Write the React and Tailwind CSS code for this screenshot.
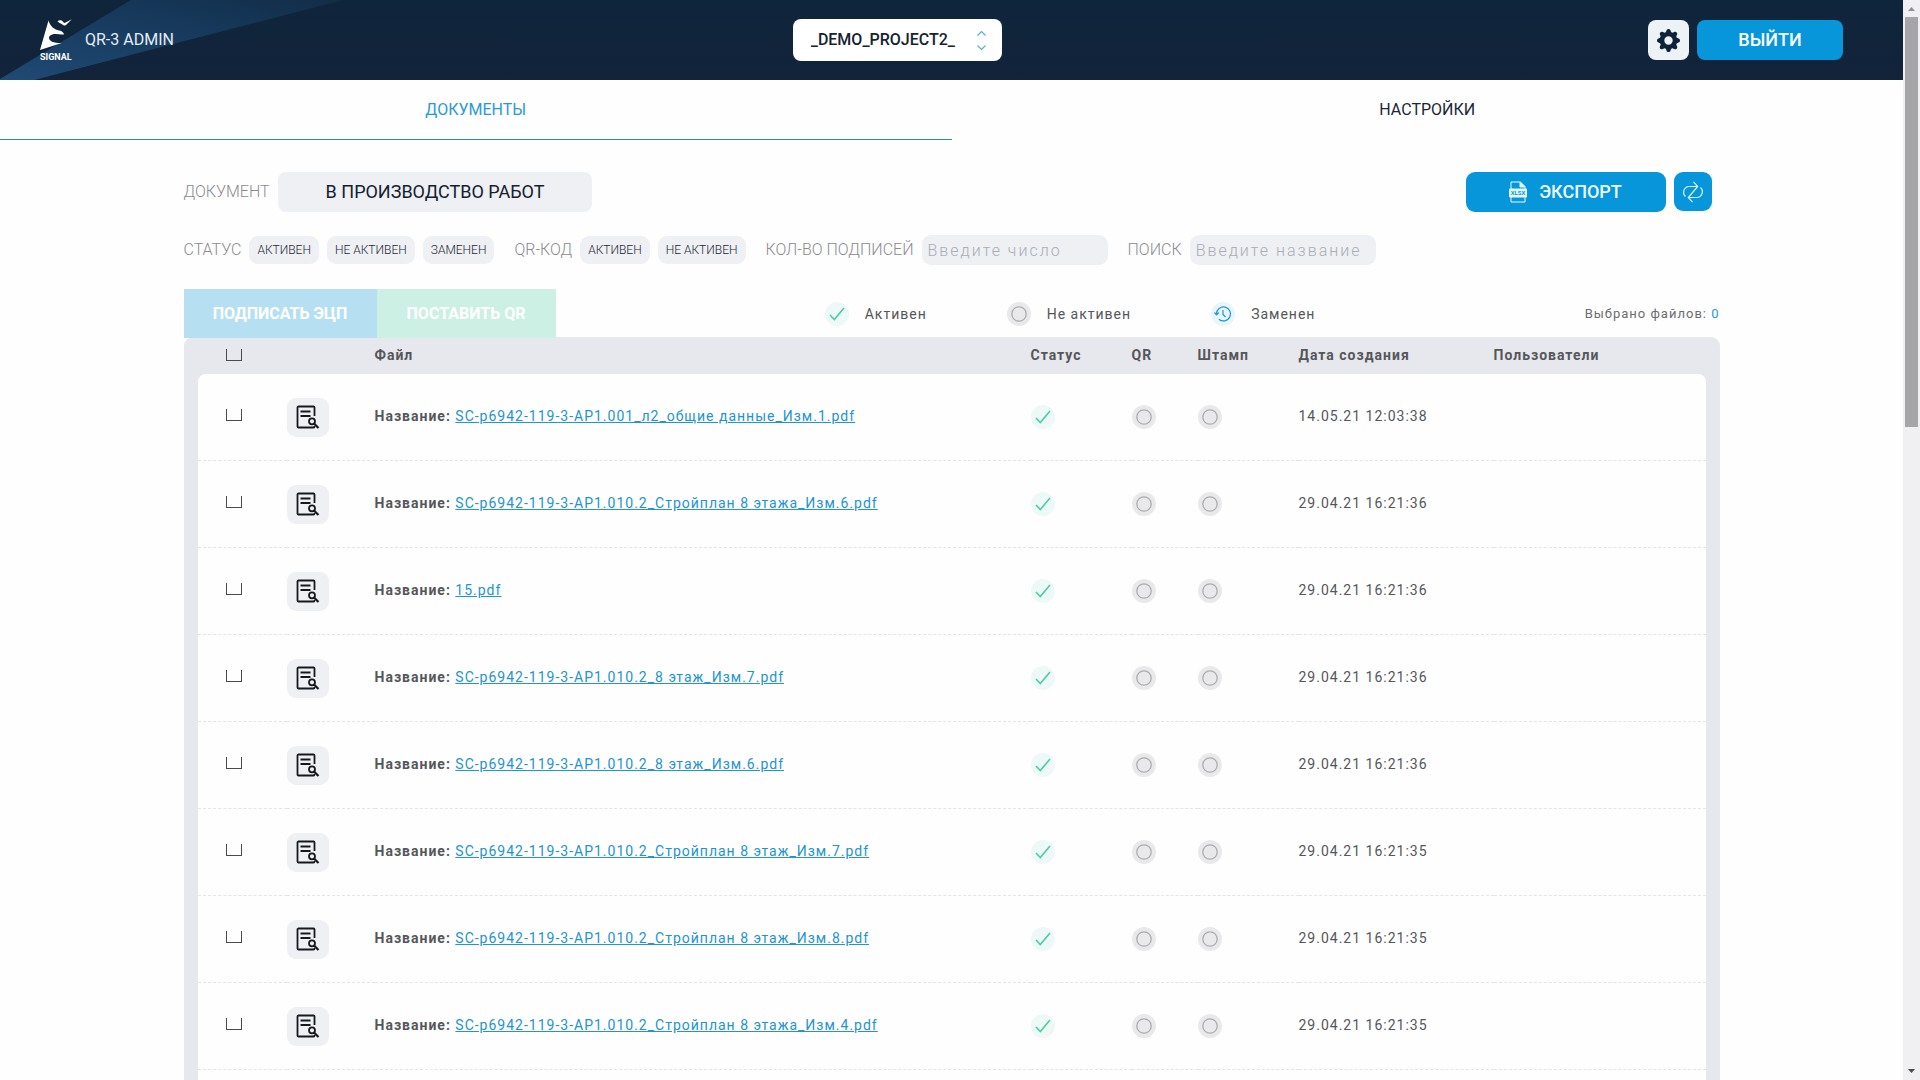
import React, { useState } from "react";
import { BsGearFill } from "react-icons/bs";

const projects = ["_DEMO_PROJECT2_"];

const files = [
  { name: "SC-p6942-119-3-АР1.001_л2_общие данные_Изм.1.pdf", date: "14.05.21 12:03:38" },
  { name: "SC-p6942-119-3-АР1.010.2_Стройплан 8 этажа_Изм.6.pdf", date: "29.04.21 16:21:36" },
  { name: "15.pdf", date: "29.04.21 16:21:36" },
  { name: "SC-p6942-119-3-АР1.010.2_8 этаж_Изм.7.pdf", date: "29.04.21 16:21:36" },
  { name: "SC-p6942-119-3-АР1.010.2_8 этаж_Изм.6.pdf", date: "29.04.21 16:21:36" },
  { name: "SC-p6942-119-3-АР1.010.2_Стройплан 8 этаж_Изм.7.pdf", date: "29.04.21 16:21:35" },
  { name: "SC-p6942-119-3-АР1.010.2_Стройплан 8 этаж_Изм.8.pdf", date: "29.04.21 16:21:35" },
  { name: "SC-p6942-119-3-АР1.010.2_Стройплан 8 этажа_Изм.4.pdf", date: "29.04.21 16:21:35" },
];

const Logo = () => (
  <svg width="33" height="42" viewBox="0 0 33 42" fill="#fff" aria-hidden="true">
    <path d="M8.500 1.500C10 7 14 10.500 19 11.500c2 .3 4 1.300 5.200 3.700-4 .7-8-.8-12 .3-2.600.8-3.700 2.600-3 4.500.9 2.500 5 4.200 12.500 4L0 31z" />
    <path d="M17.500 2.200c1.800-1.700 4.200-1.200 5.300.3.700 1 1.300 1.700 2.400 1.300L31.800.3 26 6c-1.200 1.100-2.600.6-3.600-.5-1.300-1.300-3.200-1.200-4.900-3.300z" />
    <text x="0" y="40.500" fontSize="9" fontWeight="700" fontFamily="Roboto, sans-serif">SIGNAL</text>
  </svg>
);

const Check = () => (
  <svg width="24" height="24" viewBox="0 0 24 24" fill="none" role="img" aria-label="Активен">
    <circle cx="12" cy="12" r="12" fill="#edf9f6" />
    <path d="M5 13l4.300 4.500L19 6" stroke="#4fcba0" strokeWidth="1.600" />
  </svg>
);

const Inactive = () => (
  <svg width="24" height="24" viewBox="0 0 24 24" fill="none" role="img" aria-label="Не активен">
    <circle cx="12" cy="12" r="12" fill="#e9e9eb" />
    <circle cx="12" cy="12" r="7.200" stroke="#acacae" strokeWidth="1.300" />
  </svg>
);

const Replaced = () => (
  <svg width="24" height="24" viewBox="0 0 24 24" fill="none" stroke="#1a97dc" strokeWidth="1.200" role="img" aria-label="Заменен">
    <circle cx="12" cy="12" r="12" fill="#e9f5fb" stroke="none" />
    <path d="M5.500 12a7 7 0 1 1 2.400 5.200" />
    <path d="M3.500 10.500l2 2.300 2.200-2.300" />
    <path d="M12 8v4.500l2.500 2.500" />
  </svg>
);

const DocSearch = () => (
  <svg width="24" height="24" viewBox="0 0 24 24" fill="none" stroke="#15191e" strokeWidth="1.800" aria-hidden="true">
    <path d="M18.500 11V2.500a1 1 0 0 0-1-1h-15a1 1 0 0 0-1 1v19a1 1 0 0 0 1 1h15a1 1 0 0 0 1-1V21" />
    <path d="M4.500 6.500h10M4.500 11h10" />
    <circle cx="16" cy="16.300" r="3" />
    <path d="M18 18.500l4.500 4.500" strokeWidth="2.200" />
  </svg>
);

const XlsxIcon = () => (
  <svg width="18" height="22" viewBox="0 0 18 22" fill="none" stroke="#e6fbff" aria-hidden="true">
    <path d="M2 8V1h9.500L16 5.500V8M2 16v5h14v-5" />
    <path d="M11 1v5h5z" fill="#e6fbff" />
    <rect x="0" y="7.500" width="18" height="9" rx="1" fill="#e6fbff" stroke="none" />
    <text x="9" y="14" fontSize="6" fontWeight="700" textAnchor="middle" fill="#0796da" stroke="none" fontFamily="Roboto, sans-serif">XLSX</text>
  </svg>
);

const RefreshIcon = () => (
  <svg width="22" height="22" viewBox="0 0 22 22" fill="none" stroke="#d6f3ff" strokeWidth="1.200" aria-hidden="true">
    <path d="M3.500 15.500A5.800 5.800 0 0 1 6.500 5.500h9" />
    <path d="M18.500 6.500a5.800 5.800 0 0 1-3 10h-9" />
    <path d="M11.500.800l4.200 4.700-9.400 11 4.200 4.700" />
  </svg>
);

const Pill = ({ children }) => (
  <button type="button" className="h-7 px-2 rounded-[9px] bg-[#eef0f4] text-xs text-[#1d2633] whitespace-nowrap">
    {children}
  </button>
);

const Checkbox = ({ label }) => (
  <input
    type="checkbox"
    aria-label={label}
    className="appearance-none block w-4 h-3 border border-t-0 border-[#4a4a4a] checked:bg-[#0796da]"
  />
);

const Header = () => (
  <header className="relative h-20 bg-linear-to-b from-[#0f253b] to-[#12233a] pl-10 pr-[60px] grid grid-cols-[17fr_auto_19fr] items-center">
    <svg className="absolute left-0 top-0" width="350" height="80" viewBox="0 0 350 80" aria-hidden="true">
      <defs>
        <linearGradient id="beam" x1="0" y1="1" x2="1" y2="0">
          <stop offset="0" stopColor="#1f4a75" />
          <stop offset="0.500" stopColor="#183c60" />
          <stop offset="1" stopColor="#122d48" />
        </linearGradient>
      </defs>
      <path d="M0 79L131 0h212L34 80H0z" fill="url(#beam)" />
    </svg>
    <div className="relative flex items-center gap-3">
      <Logo />
      <span className="text-base text-[#e3edf5]">QR-3 ADMIN</span>
    </div>
    <div className="relative">
      <select
        aria-label="Проект"
        className="appearance-none w-[209px] h-[42px] pl-[18px] pr-8 rounded-lg bg-white text-base font-medium text-[#17222f]"
      >
        {projects.map((p) => (
          <option key={p}>{p}</option>
        ))}
      </select>
      <svg className="absolute right-4 top-3 pointer-events-none" width="9" height="19" viewBox="0 0 9 19" fill="none" stroke="#5aaee0" strokeWidth="1.200">
        <path d="M.5 4.500l4-4 4 4M.5 14.500l4 4 4-4" />
      </svg>
    </div>
    <div className="relative flex justify-end gap-2">
      <button type="button" aria-label="Параметры" className="w-[41px] h-10 rounded-lg bg-[#edf2f7] text-[#0e2238] flex items-center justify-center">
        <BsGearFill size={23} />
      </button>
      <button type="button" className="w-[146px] h-10 rounded-lg bg-[#0796da] text-white text-lg font-medium">
        ВЫЙТИ
      </button>
    </div>
  </header>
);

const Filters = () => (
  <>
    <div className="mt-8 flex items-center justify-between pr-2">
      <div className="flex items-center gap-2">
        <span className="text-base font-light text-[#8b8b90]">ДОКУМЕНТ</span>
        <button type="button" className="h-10 px-12 rounded-lg bg-[#eef0f4] text-lg text-[#14202e]">
          В ПРОИЗВОДСТВО РАБОТ
        </button>
      </div>
      <div className="flex gap-2">
        <button type="button" className="w-[200px] h-10 rounded-[9px] bg-[#0796da] text-[#eefcff] text-lg font-medium flex items-center justify-center gap-3">
          <XlsxIcon />
          ЭКСПОРТ
        </button>
        <button type="button" aria-label="Обновить" className="w-[38px] h-[39px] rounded-[9px] bg-[#0796da] flex items-center justify-center">
          <RefreshIcon />
        </button>
      </div>
    </div>

    <div className="mt-[23px] flex items-center gap-5 text-base font-light text-[#8b8b90] whitespace-nowrap">
      <div className="flex items-center gap-2">
        <span>СТАТУС</span>
        <Pill>АКТИВЕН</Pill>
        <Pill>НЕ АКТИВЕН</Pill>
        <Pill>ЗАМЕНЕН</Pill>
      </div>
      <div className="flex items-center gap-2">
        <span>QR-КОД</span>
        <Pill>АКТИВЕН</Pill>
        <Pill>НЕ АКТИВЕН</Pill>
      </div>
      <div className="flex items-center gap-2">
        <label htmlFor="signs">КОЛ-ВО ПОДПИСЕЙ</label>
        <input id="signs" type="text" placeholder="Введите число" className="w-[186px] h-[30px] px-1.5 rounded-[9px] bg-[#eef0f4] tracking-[2px] placeholder:text-[#a9adb4]" />
      </div>
      <div className="flex items-center gap-2">
        <label htmlFor="search">ПОИСК</label>
        <input id="search" type="text" placeholder="Введите название" className="w-[186px] h-[30px] px-1.5 rounded-[9px] bg-[#eef0f4] tracking-[2px] placeholder:text-[#a9adb4]" />
      </div>
    </div>
  </>
);

const FileTable = () => (
  <div className="-mt-px rounded-t-[9px] bg-[#e7e8ee] px-3.5">
    <table className="w-full table-fixed border-separate border-spacing-0 text-sm tracking-[1px] text-[#55565a]">
      <colgroup>
        <col className="w-[89px]" />
        <col className="w-[88px]" />
        <col />
        <col className="w-[101px]" />
        <col className="w-[66px]" />
        <col className="w-[101px]" />
        <col className="w-[195px]" />
        <col className="w-[212px]" />
      </colgroup>
      <thead>
        <tr className="h-[37px] text-left *:pb-0.5">
          <th className="pl-7"><Checkbox label="Выбрать все" /></th>
          <th></th>
          <th>Файл</th>
          <th>Статус</th>
          <th>QR</th>
          <th>Штамп</th>
          <th>Дата создания</th>
          <th>Пользователи</th>
        </tr>
      </thead>
      <tbody>
        {files.map((file) => (
          <tr
            key={file.name}
            className="h-[87px] *:bg-[#fefefe] *:border-b *:border-dashed *:border-[#e4e4ea] first:*:first:rounded-tl-lg first:*:last:rounded-tr-lg"
          >
            <td className="pl-7 pb-1"><Checkbox label={file.name} /></td>
            <td>
              <button type="button" aria-label="Просмотр" className="w-[42px] h-[39px] rounded-[9px] bg-[#eef0f3] flex items-center justify-center">
                <DocSearch />
              </button>
            </td>
            <td className="pb-0.5 whitespace-nowrap">
              <b>Название: </b>
              <a href="#file" className="text-[#2394cf] underline underline-offset-1">{file.name}</a>
            </td>
            <td><Check /></td>
            <td><Inactive /></td>
            <td><Inactive /></td>
            <td className="pb-0.5">{file.date}</td>
            <td></td>
          </tr>
        ))}
      </tbody>
    </table>
    <div className="h-20 bg-[#fefefe]"></div>
  </div>
);

const Scrollbar = () => (
  <div className="w-[17px] shrink-0 bg-[#f0eff2] flex flex-col items-center" aria-hidden="true">
    <svg width="17" height="17" viewBox="0 0 17 17"><path d="M5 11l3.500-4 3.500 4z" fill="#8f9090" /></svg>
    <div className="w-[13px] h-[38%] bg-[#a6a5a8]"></div>
    <svg className="mt-auto" width="17" height="17" viewBox="0 0 17 17"><path d="M5 6l3.500 4L12 6z" fill="#4b4b4d" /></svg>
  </div>
);

const App = () => {
  const [tab, setTab] = useState("docs");
  const selected = 0;

  const tabClass = (active) =>
    `flex-1 h-[60px] border-b text-base ${
      active ? "border-[#2b8fb5] text-[#2a9ad6]" : "border-transparent text-[#1d2633]"
    }`;

  return (
    <div className="h-screen flex overflow-hidden bg-[#fefefe] font-[Roboto,sans-serif]">
      <div className="flex-1 min-w-0 overflow-hidden">
        <Header />
        <nav className="flex">
          <button type="button" className={tabClass(tab === "docs")} onClick={() => setTab("docs")}>
            ДОКУМЕНТЫ
          </button>
          <button type="button" className={tabClass(tab === "settings")} onClick={() => setTab("settings")}>
            НАСТРОЙКИ
          </button>
        </nav>

        <main className="max-w-[1536px] mx-auto">
          <Filters />

          <div className="mt-6 flex items-center">
            <div className="flex h-[49px] text-base font-bold text-white">
              <button type="button" className="w-[193px] bg-[#b6dff2]">ПОДПИСАТЬ ЭЦП</button>
              <button type="button" className="w-[179px] bg-[#ccf0e3]">ПОСТАВИТЬ QR</button>
            </div>
            <ul className="flex-1 flex justify-center gap-20 text-sm tracking-[1px] text-[#55565a]">
              <li className="flex items-center gap-4"><Check />Активен</li>
              <li className="flex items-center gap-4"><Inactive />Не активен</li>
              <li className="flex items-center gap-4"><Replaced />Заменен</li>
            </ul>
            <p className="text-[13px] tracking-[1px] text-[#6b6c70]">
              Выбрано файлов: <span className="text-[#1a9ad9]">{selected}</span>
            </p>
          </div>

          <FileTable />
        </main>
      </div>
      <Scrollbar />
    </div>
  );
};

export default App;
